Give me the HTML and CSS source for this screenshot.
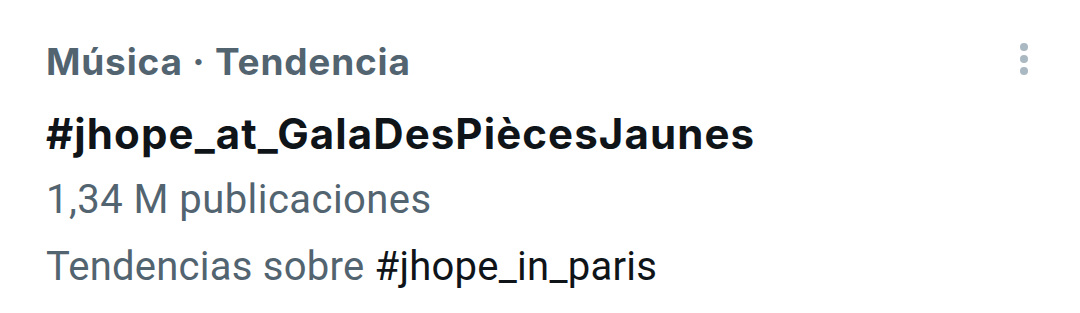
FILE: index.html
```html
<!DOCTYPE html>
<html lang="es">
<head>
    <meta charset="UTF-8">
    <meta name="viewport" content="width=device-width, initial-scale=1.0">
    <title>Tendencia</title>
    <link rel="stylesheet" href="styles.css">
</head>
<body>
    <div class="trend">
        <div class="trend-body">
            <div class="trend-meta">Música · Tendencia</div>
            <div class="trend-name">#jhope_at_GalaDesPiècesJaunes</div>
            <div class="trend-count">1,34 M publicaciones</div>
            <div class="trend-related">Tendencias sobre <span class="tag">#jhope_in_paris</span></div>
        </div>
        <!-- more menu -->
        <svg class="more" width="10" height="34" viewBox="0 0 10 34">
            <circle cx="5" cy="5" r="4"></circle>
            <circle cx="5" cy="17" r="4"></circle>
            <circle cx="5" cy="29" r="4"></circle>
        </svg>
    </div>
</body>
</html>
```

FILE: styles.css
```css
/* Trend row */
body {
    margin: 0;
    background: #ffffff;
    font-family: Roboto, "Noto Sans", sans-serif;
}
.trend {
    display: flex;
    justify-content: space-between;
    padding: 36px 51px 0 46px;
}
.trend-meta {
    font-family: Inter, Roboto, sans-serif;
    font-size: 37px;
    font-weight: 700;
    letter-spacing: 0.8px;
    color: #536471;
    line-height: 52px;
}
.trend-name {
    font-family: Inter, Roboto, sans-serif;
    font-size: 42px;
    font-weight: 700;
    letter-spacing: 1.1px;
    color: #0f1419;
    line-height: 56px;
    margin-top: 18px;
}
.trend-count {
    font-size: 40px;
    letter-spacing: 0.45px;
    color: #536471;
    line-height: 48px;
    margin-top: 14px;
}
.trend-related {
    font-size: 40px;
    letter-spacing: 0.25px;
    color: #536471;
    line-height: 48px;
    margin-top: 19px;
}
.tag {
    color: #0f1419;
}
.more {
    margin-top: 6px;
    fill: #aab8c2;
}
```
